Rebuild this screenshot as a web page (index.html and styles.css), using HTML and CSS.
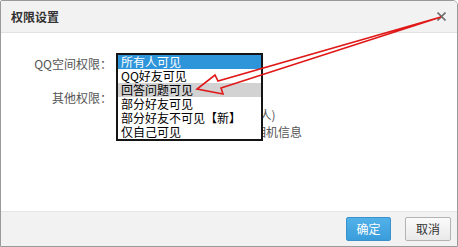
FILE: index.html
```html
<!DOCTYPE html>
<html lang="zh-CN">
<head>
<meta charset="utf-8">
<title>权限设置</title>
<link rel="stylesheet" href="styles.css">
</head>
<body>
<div class="dialog">
  <div class="dlg-header">
    <span class="dlg-title">权限设置</span>
    <button class="dlg-close" aria-label="关闭">
      <svg width="9" height="9" viewBox="0 0 9 9"><path d="M0.5 0.5 L8.5 8.5 M8.5 0.5 L0.5 8.5" stroke="#6f6f6f" stroke-width="1.6" fill="none"/></svg>
    </button>
  </div>
  <div class="dlg-body">
    <div class="form-row">
      <span class="form-label">QQ空间权限：</span>
      <div class="form-field">
        <div class="select-box"></div>
        <ul class="select-list">
          <li class="item selected">所有人可见</li>
          <li class="item">QQ好友可见</li>
          <li class="item hover">回答问题可见</li>
          <li class="item">部分好友可见</li>
          <li class="item">部分好友不可见【新】</li>
          <li class="item">仅自己可见</li>
        </ul>
      </div>
    </div>
    <div class="form-row row-other">
      <span class="form-label">其他权限：</span>
      <div class="form-field option-list">
        <div class="option"><span class="checkbox"></span></div>
        <div class="option"><span class="checkbox"></span>屏蔽陌生人空间访问(10人)</div>
        <div class="option"><span class="checkbox"></span>显示空间照片中的拍摄相机信息</div>
      </div>
    </div>
  </div>
  <div class="dlg-footer">
    <button class="btn btn-primary">确定</button>
    <button class="btn">取消</button>
  </div>
  <svg class="annotation" width="458" height="247" viewBox="0 0 458 247">
    <path d="M441 17 L218 81 L215 75 L197 89 L223 94 L221 88 Z" fill="none" stroke="#e01818" stroke-width="1.6" stroke-linejoin="miter"/>
  </svg>
</div>
</body>
</html>
```

FILE: styles.css
```css
* { box-sizing: border-box; }
html, body { margin: 0; padding: 0; background: #fff; }
body {
  font-family: "Noto Sans CJK SC", "Noto Sans", sans-serif;
  font-size: 12px;
  color: #333;
}
.dialog {
  position: relative;
  width: 458px;
  height: 247px;
  border: 1px solid #9a9a9a;
  border-top-right-radius: 5px;
  border-top-left-radius: 2px;
  display: flex;
  flex-direction: column;
  background: #fff;
  overflow: hidden;
}
.dlg-header {
  height: 32px;
  flex: none;
  background: #f2f2f2;
  border-bottom: 1px solid #e2e2e2;
  display: flex;
  align-items: center;
  justify-content: space-between;
  padding: 0 11px 0 10px;
}
.dlg-title {
  font-weight: bold;
  font-size: 12px;
  color: #333;
  line-height: 16px;
}
.dlg-close {
  width: 9px;
  height: 9px;
  padding: 0;
  border: 0;
  background: none;
  display: block;
  margin-top: -1px;
}
.dlg-close svg { display: block; }
.dlg-body {
  flex: 1;
  padding-top: 22px;
}
.form-row {
  display: flex;
  align-items: flex-start;
}
.row-other { margin-top: 16px; }
.form-label {
  width: 111px;
  margin-right: 4px;
  text-align: right;
  line-height: 18px;
  color: #555;
  flex: none;
}
.form-field {
  position: relative;
  flex: none;
}
.select-box {
  width: 147px;
  height: 18px;
  border: 1px solid #aaa;
}
.select-list {
  position: absolute;
  top: -2px;
  left: 0;
  z-index: 2;
  width: 147px;
  margin: 0;
  padding: 0;
  list-style: none;
  background: #fff;
  border: 2px solid #141414;
}
.item {
  height: 14px;
  line-height: 14px;
  padding-left: 3px;
  color: #000;
  white-space: nowrap;
}
.item.selected { background: #2f95da; color: #fff; }
.item.hover { background: #d2d2d2; }
.option-list { padding-left: 2px; }
.option {
  display: flex;
  align-items: center;
  line-height: 17px;
  height: 17px;
  color: #555;
  white-space: nowrap;
}
.checkbox {
  width: 13px;
  height: 13px;
  border: 1px solid #999;
  margin-right: 3px;
  flex: none;
}
.dlg-footer {
  height: 35px;
  flex: none;
  background: #f2f2f2;
  border-top: 1px solid #e6e6e6;
  display: flex;
  justify-content: flex-end;
  align-items: flex-start;
  gap: 14px;
  padding: 5px 6px 0 0;
}
.btn {
  height: 24px;
  width: 46px;
  padding: 0;
  font-family: inherit;
  font-size: 12px;
  line-height: 22px;
  border: 1px solid #b3b3b3;
  border-radius: 2px;
  background: linear-gradient(#fbfbfb, #e9e9e9);
  color: #333;
}
.btn-primary {
  width: 45px;
  border-color: #3b91cc;
  background: linear-gradient(#52b1e8, #3a9ddb);
  color: #fff;
}
.annotation {
  position: absolute;
  left: -1px;
  top: -1px;
  z-index: 5;
  pointer-events: none;
}
```
